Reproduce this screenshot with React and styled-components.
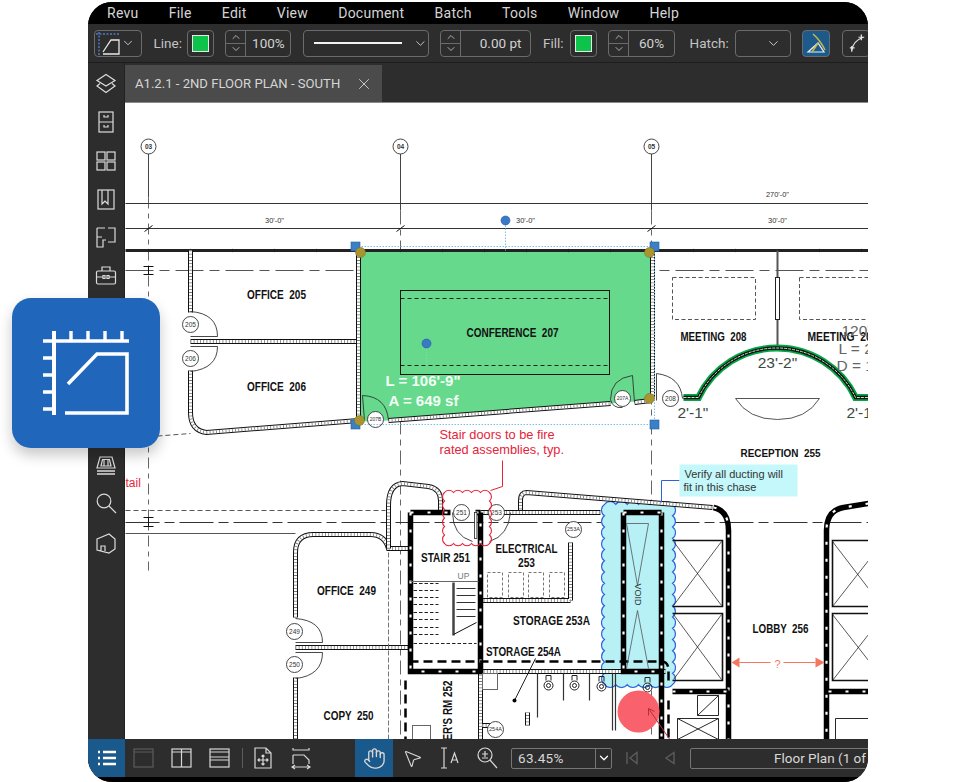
import React from "react";
import styled, { createGlobalStyle } from "styled-components";
import { ChevronDown, ChevronUp, X, Hand, MousePointer2 } from "lucide-react";

const Global = createGlobalStyle`
  html, body { margin: 0; padding: 0; background: #fff; overflow: hidden; }
  body { font-family: Roboto, "Liberation Sans", sans-serif; }
`;

const Stage = styled.div`
  position: relative;
  width: 959px;
  height: 782px;
  padding: 2px 91px 0 88px;
  box-sizing: border-box;
`;
const Win = styled.div`
  width: 780px;
  height: 780px;
  display: flex;
  flex-direction: column;
  background: #000;
  border-radius: 24px;
  overflow: hidden;
`;
const MenuBar = styled.nav`
  height: 22px;
  flex: none;
  display: flex;
  align-items: center;
  gap: 30.2px;
  padding-left: 19px;
  background: #000;
`;
const MenuItem = styled.span`
  color: #d4d4d4;
  font-size: 14px;
  letter-spacing: 0.25px;
  white-space: nowrap;
`;
const Toolbar = styled.div`
  height: 39px;
  flex: none;
  box-sizing: border-box;
  display: flex;
  align-items: center;
  gap: 11.5px;
  padding: 0 0 0 6px;
  background: #2d2d2d;
  border-bottom: 1px solid #1d1d1d;
  overflow: hidden;
`;
const Group = styled.div`
  display: flex;
  align-items: center;
  flex: none;
  gap: ${(p) => p.$gap || 5}px;
  margin-left: ${(p) => p.$ml || 0}px;
`;
const Label = styled.span`
  color: #c4c4c4;
  font-size: 13.5px;
  white-space: nowrap;
`;
const Control = styled.div`
  width: ${(p) => p.$w}px;
  height: 27px;
  flex: none;
  box-sizing: border-box;
  display: flex;
  align-items: center;
  justify-content: ${(p) => p.$justify || "center"};
  padding: ${(p) => p.$pad || "0"};
  border: 1px solid #6b6b6b;
  border-radius: 4px;
  color: #d2d2d2;
  font-size: 13.5px;
  background: ${(p) => p.$bg || "transparent"};
`;
const SwatchFill = styled.span`
  width: 15px;
  height: 15px;
  background: #0cc44a;
  border: 1px solid #e8e8e8;
`;
const Spinner = styled.div`
  width: ${(p) => p.$w}px;
  height: 27px;
  flex: none;
  box-sizing: border-box;
  display: flex;
  border: 1px solid #6b6b6b;
  border-radius: 4px;
`;
const Steps = styled.div`
  width: 19px;
  flex: none;
  display: flex;
  flex-direction: column;
  align-items: center;
  justify-content: space-around;
  border-right: 1px solid #6b6b6b;
  color: #cfcfcf;
  background: linear-gradient(#6b6b6b, #6b6b6b) center / 100% 1px no-repeat;
`;
const SpinValue = styled.div`
  flex: 1;
  display: flex;
  align-items: center;
  justify-content: ${(p) => p.$justify || "center"};
  padding-right: ${(p) => p.$pr || 0}px;
  color: #d2d2d2;
  font-size: 13.5px;
`;
const LineSample = styled.span`
  width: 89px;
  height: 2px;
  background: #f2f2f2;
  margin-right: 11px;
`;
const Workspace = styled.div`
  flex: 1;
  min-height: 0;
  display: flex;
`;
const Rail = styled.aside`
  width: 37px;
  flex: none;
  box-sizing: border-box;
  display: flex;
  flex-direction: column;
  align-items: center;
  gap: 14.3px;
  padding-top: 9px;
  background: #2d2d2d;
  border-right: 1px solid #222;
`;
const RailGap = styled.div`
  height: 138px;
  flex: none;
`;
const Main = styled.main`
  flex: 1;
  min-width: 0;
  display: flex;
  flex-direction: column;
`;
const TabStrip = styled.div`
  height: 40px;
  flex: none;
  box-sizing: border-box;
  display: flex;
  padding-top: 2px;
  background: #2d2d2d;
  border-bottom: 1px solid #8a8a8a;
`;
const Tab = styled.div`
  width: 257px;
  box-sizing: border-box;
  display: flex;
  align-items: center;
  justify-content: space-between;
  padding: 0 9px 0 10px;
  background: #4b4b4b;
  color: #d6d6d6;
  font-size: 13.1px;
  white-space: nowrap;
`;
const Canvas = styled.div`
  flex: 1;
  min-height: 0;
  background: #fff;
  overflow: hidden;
`;
const PlanSvg = styled.svg`
  display: block;
`;
const BottomBar = styled.footer`
  height: 38px;
  flex: none;
  display: flex;
  align-items: center;
  background: #2d2d2d;
  overflow: hidden;
`;
const BottomBtn = styled.div`
  width: ${(p) => p.$w || 38}px;
  height: 38px;
  flex: none;
  display: flex;
  align-items: center;
  justify-content: center;
  margin-left: ${(p) => p.$ml || 0}px;
  background: ${(p) => (p.$active ? "#19598c" : "transparent")};
  color: ${(p) => (p.$dim ? "#5c5c5c" : "#d8d8d8")};
`;
const BarSep = styled.span`
  width: 1px;
  height: 20px;
  flex: none;
  margin-left: 3px;
  background: #5c5c5c;
`;
const ZoomSelect = styled.div`
  width: 101px;
  height: 21px;
  flex: none;
  box-sizing: border-box;
  display: flex;
  margin-left: 4px;
  border: 1px solid #767676;
  border-radius: 2px;
  color: #d8d8d8;
  font-size: 13.5px;
`;
const ZoomValue = styled.span`
  flex: 1;
  padding-left: 6px;
  line-height: 19px;
  letter-spacing: 0.3px;
  border-right: 1px solid #767676;
`;
const ZoomArrow = styled.span`
  width: 15px;
  display: flex;
  align-items: center;
  justify-content: center;
  color: #fff;
`;
const PageField = styled.div`
  width: 200px;
  height: 21px;
  flex: none;
  box-sizing: border-box;
  margin-left: 1px;
  padding-left: 83px;
  border: 1px solid #767676;
  border-radius: 2px;
  color: #d8d8d8;
  font-size: 13.5px;
  line-height: 19px;
  white-space: nowrap;
`;
const FootPad = styled.div`
  height: 5px;
  flex: none;
  background: #000;
`;
const Tile = styled.div`
  position: absolute;
  left: 12px;
  top: 298px;
  width: 148px;
  height: 150px;
  display: flex;
  border-radius: 19px;
  background: #2067bb;
  box-shadow: 0 7px 14px rgba(0, 0, 0, 0.22);
`;
const RoomText = styled.text`
  font-family: "Liberation Sans", sans-serif;
  font-weight: 700;
  white-space: pre;
  font-size: ${(p) => p.$size || 12}px;
  fill: ${(p) => p.$fill || "#111"};
`;
const NoteText = styled.text`
  font-family: "Liberation Sans", sans-serif;
  font-weight: ${(p) => (p.$bold ? 700 : 400)};
  font-size: ${(p) => p.$size || 12.5}px;
  fill: ${(p) => p.$fill || "#333"};
`;

const Ico = ({ children, s = 24, sw = 1.2 }) => (
  <svg width={s} height={s} viewBox="0 0 24 24" fill="none" stroke="currentColor" strokeWidth={sw}>
    {children}
  </svg>
);
const RailIcon = styled.div`
  width: 24px;
  height: 24px;
  flex: none;
  color: #dcdcdc;
`;

const Room = ({ x, y, w, children, size, fill }) => (
  <RoomText x={x} y={y} textAnchor="middle" textLength={w} lengthAdjust="spacingAndGlyphs" $size={size} $fill={fill}>
    {children}
  </RoomText>
);

const Wall = ({ d }) => (
  <g fill="none">
    <path d={d} stroke="#111" strokeWidth="5" />
    <path d={d} stroke="#fff" strokeWidth="3" />
    <path d={d} stroke="#777" strokeWidth="3" strokeDasharray="0.8 2.4" />
  </g>
);
const HeavyWall = ({ d }) => (
  <g fill="none">
    <path d={d} stroke="#000" strokeWidth="5.5" />
    <path d={d} stroke="#fff" strokeWidth="2.2" strokeDasharray="3 14" />
  </g>
);
const Bubble = ({ x, y, r = 8, t, size = 6.5, bold }) => (
  <g>
    <circle cx={x} cy={y} r={r} fill="#fff" stroke="#333" strokeWidth="0.9" />
    <NoteText x={x} y={y + size * 0.36} textAnchor="middle" $size={size} $bold={bold}>
      {t}
    </NoteText>
  </g>
);
const cloud = (x0, y0, x1, y1, s) => {
  let d = `M${x0} ${y0}`;
  const r = s * 0.62;
  const nx = Math.round((x1 - x0) / s);
  const ny = Math.round((y1 - y0) / s);
  const arc = (x, y) => (d += ` A${r} ${r} 0 0 1 ${x.toFixed(1)} ${y.toFixed(1)}`);
  for (let i = 1; i <= nx; i++) arc(x0 + ((x1 - x0) * i) / nx, y0);
  for (let i = 1; i <= ny; i++) arc(x1, y0 + ((y1 - y0) * i) / ny);
  for (let i = 1; i <= nx; i++) arc(x1 - ((x1 - x0) * i) / nx, y1);
  for (let i = 1; i <= ny; i++) arc(x0, y1 - ((y1 - y0) * i) / ny);
  return d + "Z";
};
const Handle = ({ x, y }) => <rect x={x - 4.5} y={y - 4.5} width="9" height="9" fill="#3b7fc6" stroke="#1f5f9f" strokeWidth="0.6" />;
const Olive = ({ x, y }) => <circle cx={x} cy={y} r="5" fill="#a89530" stroke="#7d6f20" strokeWidth="0.5" />;
const Toilet = ({ x, y }) => (
  <g fill="none" stroke="#222" strokeWidth="1">
    <circle cx={x} cy={y + 3} r="4.5" />
    <circle cx={x} cy={y + 3} r="2" />
    <path d={`M${x - 2.5} ${y - 2}V${y - 7}h5V${y - 2}`} />
  </g>
);
const Door = ({ d }) => <path d={d} fill="none" stroke="#333" strokeWidth="0.9" />;

const Plan = () => (
  <PlanSvg width="743" height="636" viewBox="125 103 743 636">
    <g transform="translate(0.5 0.5)">
    {/* grid axes */}
    <g fill="none" stroke="#444" strokeWidth="1">
      <path d="M148 153V197" />
      <path d="M148 197V570" strokeDasharray="11 5 5 5" stroke="#666" />
      <path d="M400 153V210" />
      <path d="M400 210V739" strokeDasharray="14 5 6 5" stroke="#666" />
      <path d="M651 153V210" />
      <path d="M651 210V739" strokeDasharray="14 5 6 5" stroke="#666" />
      <path d="M125 203H868" stroke="#333" />
      <path d="M125 228H868" stroke="#333" />
      <path d="M125 270H868" strokeDasharray="28 6 10 6" stroke="#555" />
      <path d="M125 522H868" strokeDasharray="34 5 10 5" stroke="#333" />
      <path d="M125 510H385" strokeDasharray="5 3" stroke="#555" />
      <path d="M125 533H295" stroke="#555" />
      <path d="M125 438L190 433" strokeDasharray="5 3" stroke="#555" />
      <path d="M143 266h10M148 266v8M143 274h10M394 266h10M399 266v8M394 274h10M143 517h10M148 517v9M143 526h10" stroke="#111" />
      <path d="M144 231l8-6M396 231l8-6M647 231l8-6" stroke="#111" />
    </g>
    <Bubble x={148} y={146} t="03" r={7.5} bold />
    <Bubble x={400} y={146} t="04" r={7.5} bold />
    <Bubble x={651} y={146} t="05" r={7.5} bold />
    <NoteText x={274} y={222} textAnchor="middle" textLength="19" lengthAdjust="spacingAndGlyphs" $size={8}>30'-0"</NoteText>
    <NoteText x={525} y={222} textAnchor="middle" textLength="19" lengthAdjust="spacingAndGlyphs" $size={8}>30'-0"</NoteText>
    <NoteText x={777} y={222} textAnchor="middle" textLength="19" lengthAdjust="spacingAndGlyphs" $size={8}>30'-0"</NoteText>
    <NoteText x={777} y={196} textAnchor="middle" textLength="23" lengthAdjust="spacingAndGlyphs" $size={8}>270'-0"</NoteText>

    {/* conference fill */}
    <polygon points="359,251 650,251 650,399 634,401 610,403 388,420 359,421" fill="#66d98c" />
    <path d="M125 250H868" stroke="#222" strokeWidth="3.2" fill="none" />
    <path d="M148 250h.1M190 250h.1M232 250h.1M274 250h.1M316 250h.1M400 250h.1M442 250h.1M484 250h.1M526 250h.1M568 250h.1M610 250h.1M693 250h.1M735 250h.1M819 250h.1M861 250h.1" stroke="#000" strokeWidth="5" fill="none" />
    <rect x="400" y="290" width="209" height="84" fill="none" stroke="#111" strokeWidth="1" />
    <path d="M400 298H609M400 365H609" stroke="#111" strokeWidth="0.9" strokeDasharray="4 3" fill="none" />

    {/* offices */}
    <Wall d="M190 250V312" />
    <Wall d="M190 370V412Q190 430 206 432L358 420" />
    <Wall d="M190 341H358" />
    <Wall d="M358 250V420" />
    <Wall d="M652 250V398" />
    <Wall d="M388 420L610 403" />
    <Wall d="M634 402L650 400" />
    <Door d="M190 311Q217 313 217 336H190M217 346H190M217 346Q217 368 190 371" />
    <Bubble x={190} y={324} t="205" />
    <Bubble x={190} y={358} t="206" />
    <Room x={276} y={298} w={59}>OFFICE  205</Room>
    <Room x={276} y={390} w={59}>OFFICE  206</Room>
    <Room x={512} y={336} w={92}>CONFERENCE  207</Room>
    <circle cx="426" cy="343" r="4.5" fill="#3a78c8" stroke="#1f5f9f" strokeWidth="0.6" />
    <path d="M426 348V366" stroke="#7da" strokeDasharray="1.5 1.5" fill="none" />
    <RoomText x={385} y={385} $size={15} $fill="#f2fff4">L = 106'-9"</RoomText>
    <RoomText x={388} y={405} $size={15} $fill="#f2fff4">A = 649 sf</RoomText>
    <Door d="M362 395Q386 396 388 420M362 395L364 420" />
    <Bubble x={375} y={419} t="207B" r={8} size={5} />
    <Door d="M632 375Q610 378 610 399Q612 408 622 407M632 375L634 402" />
    <Bubble x={622} y={398} t="207A" r={8} size={5} />
    <Door d="M656 373Q680 376 682 398M656 373V400" />
    <Bubble x={670} y={398} t="208" r={8} />

    {/* dotted selection */}
    <path d="M355 246H654M355 424H654M654 246V424M505 225V250" stroke="#7cc0e8" strokeWidth="1" strokeDasharray="1.5 1.5" fill="none" />
    <Handle x={355} y={246} />
    <Handle x={654} y={246} />
    <Handle x={355} y={424} />
    <Handle x={654} y={424} />
    <Olive x={360} y={252} />
    <Olive x={649} y={252} />
    <Olive x={359} y={420} />
    <Olive x={649} y={398} />
    <circle cx="505" cy="220" r="4.5" fill="#3a78c8" stroke="#1f5f9f" strokeWidth="0.6" />

    {/* meeting rooms */}
    <g fill="none" stroke="#555" strokeWidth="1" strokeDasharray="4 2.5">
      <rect x="672" y="277" width="83" height="42" />
      <rect x="799" y="277" width="90" height="42" />
    </g>
    <path d="M777 250V347" stroke="#555" strokeWidth="2" fill="none" />
    <rect x="775" y="277" width="4" height="42" fill="#fff" stroke="#222" strokeWidth="1" />
    <Room x={713} y={340} w={66}>MEETING  208</Room>
    <RoomText x={807} y={340} textLength="70" lengthAdjust="spacingAndGlyphs">MEETING  208</RoomText>
    <path d="M683 397H698A87 87 0 0 1 855 397H868" fill="none" stroke="#06a545" strokeWidth="7" />
    <path d="M683 397H698A87 87 0 0 1 855 397H868" fill="none" stroke="#111" strokeWidth="3.4" />
    <path d="M683 397H698A87 87 0 0 1 855 397H868" fill="none" stroke="#bfe8cc" strokeWidth="1" strokeDasharray="3 1" />
    <path d="M735 398H819Q806 419 777 419Q748 419 735 398Z" fill="#fff" stroke="#555" strokeWidth="1" />
    <NoteText x={777} y={367} textAnchor="middle" $size={15.5} $fill="#3b4a3f">23'-2"</NoteText>
    <NoteText x={677} y={417} $size={15.5} $fill="#3b4a3f">2'-1"</NoteText>
    <NoteText x={846} y={417} $size={15.5} $fill="#3b4a3f">2'-1"</NoteText>
    <NoteText x={841} y={335} $size={15.5} $fill="#666">120'</NoteText>
    <NoteText x={838} y={353} $size={15.5} $fill="#666">L = 2</NoteText>
    <NoteText x={836} y={370} $size={15.5} $fill="#666">D = 1</NoteText>
    <Room x={780} y={456} w={80} size={11.5}>RECEPTION  255</Room>

    {/* red notes */}
    <NoteText x={439} y={438} $size={12.8} $fill="#e5233a">Stair doors to be fire</NoteText>
    <NoteText x={439} y={453} $size={12.8} $fill="#e5233a">rated assemblies, typ.</NoteText>
    <NoteText x={125} y={486} $size={12} $fill="#e5233a">tail</NoteText>

    {/* cyan void */}
    <path d={cloud(604, 504, 672, 684, 11)} fill="#b7f1f6" stroke="#2a63dd" strokeWidth="1.1" />

    {/* lower walls */}
    <Wall d="M295 617V552Q295 534 313 534H370Q384 534 388 548H408" />
    <Wall d="M388 548V505Q388 484 402 483L428 486Q440 488 440 500V512" />
    <Wall d="M295 677V739" />
    <Wall d="M295 647H408" />
    <Door d="M295 618Q322 620 322 642H295M322 652H295M322 652Q322 675 295 678" />
    <Bubble x={294} y={631} t="249" />
    <Bubble x={294} y={664} t="250" />
    <path d="M388 552V739" stroke="#666" strokeWidth="0.9" strokeDasharray="5 2" fill="none" />
    <Room x={346} y={594} w={59}>OFFICE  249</Room>
    <Room x={348} y={719} w={50}>COPY  250</Room>

    <Wall d="M520 512V500Q520 492 526 492L712 507" />
    <Wall d="M480 512H600" />
    <Wall d="M570 542V600M480 600H570" />
    <Wall d="M480 671H665" />
    <Wall d="M480 671V739" />
    <Wall d="M482 725H497M527 725V712" />
    <HeavyWall d="M410 512H450M475 512H480M410 512V671H480V512" />
    <HeavyWall d="M661 512V739" />
    <HeavyWall d="M623 512H661M623 512V671H661" />
    <HeavyWall d="M713 507Q728 510 728 530V739" />
    <HeavyWall d="M868 503L843 507Q826 510 826 530V739" />
    <HeavyWall d="M672 691H728M828 691H868" />
    <path d="M409 661H661Q668 661 668 670V684" fill="none" stroke="#000" strokeWidth="2.5" strokeDasharray="9 5" />
    <path d="M668 700V739M405 680V739" fill="none" stroke="#000" strokeWidth="2.5" strokeDasharray="9 5" />

    {/* stair */}
    <path d="M410 581H478" stroke="#666" fill="none" />
    <path d="M413 583H438M413 590H438M413 597H438M413 604H438M413 612H438M413 619H438M413 627H438M413 634H438M413 643H476" stroke="#222" strokeDasharray="3.5 2" fill="none" />
    <path d="M456 588H475M456 595H475M456 602H475M456 609H475M456 616H475" stroke="#333" fill="none" />
    <path d="M453 582V635" stroke="#444" strokeWidth="2.5" fill="none" />
    <path d="M453 634L476 622" stroke="#111" fill="none" />
    <NoteText x={463} y={578} textAnchor="middle" $size={8.5} $fill="#777">UP</NoteText>
    <Room x={445} y={561} w={49}>STAIR 251</Room>
    <Room x={526} y={552} w={62}>ELECTRICAL</Room>
    <Room x={526} y={566} w={17}>253</Room>
    <g fill="none" stroke="#777" strokeDasharray="3 2">
      <rect x="487" y="572" width="15" height="25" />
      <rect x="508" y="572" width="15" height="25" />
      <rect x="528" y="572" width="15" height="25" />
      <rect x="549" y="572" width="15" height="25" />
    </g>
    <Room x={551} y={624} w={77}>STORAGE 253A</Room>
    <Room x={523} y={655} w={75}>STORAGE 254A</Room>
    <path d="M535 658L514 700" stroke="#222" fill="none" />
    <circle cx="514" cy="700" r="2" fill="#000" />
    <rect x="482" y="673" width="15" height="16" fill="none" stroke="#666" />
    <RoomText transform="translate(451 746) rotate(-90)" textLength="66" lengthAdjust="spacingAndGlyphs">TER'S RM 252</RoomText>
    <rect x="412" y="725" width="18" height="16" fill="none" stroke="#666" />
    <path d="M537 673V717M615 673V730M612 673V730M563 673V700M589 673V700" stroke="#333" fill="none" strokeWidth="1.2" />
    <Toilet x={548} y={682} />
    <Toilet x={574} y={682} />
    <Toilet x={601} y={683} />
    <Toilet x={647} y={684} />
    <Bubble x={495} y={729} t="254A" r={8} size={5.5} />
    <Door d="M452 512Q452 535 472 541M510 512Q508 535 489 541" />
    <Bubble x={461} y={512} t="251" />
    <Bubble x={496} y={512} t="253" />
    <Bubble x={573} y={529} t="253A" r={8} size={5.5} />
    <rect x="474" y="512" width="2.4" height="26" fill="#fff" stroke="#222" strokeWidth="0.8" />
    <path d={cloud(444, 492, 489, 543, 9)} fill="none" stroke="#e5233a" strokeWidth="1.1" />
    <path d="M502 460V486L490 490" fill="none" stroke="#e5233a" strokeWidth="1" />

    {/* void interior */}
    <path d="M626 523H648M626 523L637 585M648 523L637 585M626 668L637 610M648 668L637 610" stroke="#555" strokeWidth="0.8" fill="none" />
    <NoteText transform="translate(634 583) rotate(90)" $size={9} $fill="#333">VOID</NoteText>

    {/* shafts */}
    <g fill="none" stroke="#111">
      <path d="M672 540H722V606H672M672 613H722V680H672" strokeWidth="1.6" />
      <path d="M673 541L721 605M721 541L673 605M673 614L721 679M721 614L673 679" strokeWidth="0.7" />
      <path d="M868 540H832V606H868M868 613H832V680H868" strokeWidth="1.6" />
      <path d="M832 541L868 588M868 560L832 606M832 614L868 660M868 634L832 680" strokeWidth="0.7" />
      <path d="M697 695H718V715H697ZM697 715L718 695M677 739V718H718V739M677 718L718 739M718 718L677 739M868 718H835V739" strokeWidth="0.9" />
    </g>
    <Room x={780} y={632} w={56}>LOBBY  256</Room>
    <g fill="#f4765f">
      <path d="M731 662L739 657V667Z" />
      <path d="M824 662L815 657V667Z" />
    </g>
    <path d="M739 662H770M783 662H815" stroke="#f4765f" strokeWidth="1" fill="none" />
    <NoteText x={777} y={667} textAnchor="middle" $size={11} $fill="#f4765f">?</NoteText>
    <circle cx="638" cy="711" r="21" fill="#f9616c" />
    <path d="M670 740L648 708M648 708v7M648 708l6 3" stroke="#b3303a" strokeWidth="1" fill="none" />
    <path d="M661 502V480H679" stroke="#2a63dd" strokeWidth="1" fill="none" />
    <rect x="679" y="464" width="118" height="32" fill="#c5f8fb" />
    <NoteText x={684} y={477} $size={11} $fill="#333">Verify all ducting will</NoteText>
    <NoteText x={683} y={490} $size={11} $fill="#333">fit in this chase</NoteText>
    </g>
  </PlanSvg>
);

const Stepper = ({ w, value, justify, pr }) => (
  <Spinner $w={w}>
    <Steps>
      <ChevronUp size={12} strokeWidth={1.6} />
      <ChevronDown size={12} strokeWidth={1.6} />
    </Steps>
    <SpinValue $justify={justify} $pr={pr}>{value}</SpinValue>
  </Spinner>
);

const Menu = ["Revu", "File", "Edit", "View", "Document", "Batch", "Tools", "Window", "Help"];

export default function App() {
  return (
    <>
      <Global />
      <Stage>
        <Win>
          <MenuBar>
            {Menu.map((m) => (
              <MenuItem key={m}>{m}</MenuItem>
            ))}
          </MenuBar>
          <Toolbar>
            <Control $w={48} $justify="flex-start">
              <svg width="26" height="25" viewBox="0 0 26 25" fill="none">
                <path d="M1 3H24M4 1V24" stroke="#4d78c0" strokeWidth="1.5" strokeDasharray="2 1.5" />
                <path d="M8 21L16 9H24V23H8" stroke="#e8e8e8" strokeWidth="1.3" />
              </svg>
              <ChevronDown size={14} color="#d0d0d0" strokeWidth={1.6} />
            </Control>
            <Group>
              <Label>Line:</Label>
              <Control $w={27}><SwatchFill /></Control>
            </Group>
            <Stepper w={66} value="100%" />
            <Control $w={126} $justify="flex-start" $pad="0 0 0 10px">
              <LineSample />
              <ChevronDown size={15} strokeWidth={1.5} />
            </Control>
            <Stepper w={91} value="0.00 pt" justify="flex-end" pr={9} />
            <Group $gap={6}>
              <Label>Fill:</Label>
              <Control $w={27}><SwatchFill /></Control>
            </Group>
            <Stepper w={67} value="60%" />
            <Group $gap={6} $ml={3}>
              <Label>Hatch:</Label>
              <Control $w={56} $justify="flex-end" $pad="0 9px 0 0">
                <ChevronDown size={15} strokeWidth={1.5} />
              </Control>
            </Group>
            <Control $w={28} $bg="#1d5a8c">
              <svg width="24" height="24" viewBox="0 0 24 24" fill="none">
                <path d="M4 21H20L14 12Z" stroke="#f0f0f0" strokeWidth="1.2" />
                <path d="M9 3Q16 9 21 19M14 12L8 21" stroke="#c8b84a" strokeWidth="1.6" />
              </svg>
            </Control>
            <Control $w={28} $justify="flex-start" $pad="0 0 0 3px">
              <svg width="24" height="24" viewBox="0 0 24 24" fill="none" stroke="#e2e2e2" strokeWidth="1.3">
                <path d="M6 20Q7 10 18 6" />
                <path d="M16 3v6M13 6h6M4 17h5M6 15v6" />
              </svg>
            </Control>
          </Toolbar>
          <Workspace>
            <Rail>
              <RailIcon><Ico><path d="M12 2.5L21 8.5L12 14L3 8.5Z" /><path d="M6 11.5L3 14L12 20.5L21 14L18 11.5" /></Ico></RailIcon>
              <RailIcon><Ico><rect x="5" y="2" width="14" height="20" /><path d="M5 12H19M10 5v2h4V5M10 15v2h4v-2" /></Ico></RailIcon>
              <RailIcon><Ico><rect x="3" y="3" width="8" height="8" /><rect x="13" y="3" width="8" height="8" /><rect x="3" y="13" width="8" height="8" /><rect x="13" y="13" width="8" height="8" /></Ico></RailIcon>
              <RailIcon><Ico><rect x="4" y="3" width="16" height="19" /><path d="M8 3V17L11 14L14 17V3" /></Ico></RailIcon>
              <RailIcon><Ico><path d="M3 3H11M14 3H21V17H14M3 3V22H9V15H12M3 12H8" /></Ico></RailIcon>
              <RailIcon><Ico><rect x="2.5" y="8" width="19" height="13" rx="1.5" /><path d="M8 8V4H16V8M3 14H9M15 14H21M9 12.5H11V15.5H9ZM13 12.5H15V15.5H13Z" /></Ico></RailIcon>
              <RailGap />
              <RailIcon><Ico><path d="M6 3H18L21 14H3ZM8.5 5.5H15.5L17 12H7ZM10 6V12M14 6V12" /><path d="M3 17H21M3 20H21" strokeWidth="1.6" /></Ico></RailIcon>
              <RailIcon><Ico><circle cx="10" cy="9" r="6.8" /><path d="M15 14L22 21" /></Ico></RailIcon>
              <RailIcon><Ico><path d="M3 8L15 3L21 8V18L15 22L3 19ZM7 20V15H11V20" /></Ico></RailIcon>
            </Rail>
            <Main>
              <TabStrip>
                <Tab>
                  A1.2.1 - 2ND FLOOR PLAN - SOUTH
                  <X size={18} strokeWidth={1.2} />
                </Tab>
              </TabStrip>
              <Canvas>
                <Plan />
              </Canvas>
            </Main>
          </Workspace>
          <BottomBar>
            <BottomBtn $active $w={37}>
              <Ico sw={2.4}><path d="M3 6H5M3 12H5M3 18H5" stroke="#fff" /><path d="M8 6H21M8 12H21M8 18H21" stroke="#fff" /></Ico>
            </BottomBtn>
            <BottomBtn $dim><Ico><rect x="2" y="3" width="19" height="18" /><path d="M2 6H21" /></Ico></BottomBtn>
            <BottomBtn><Ico><rect x="2" y="3" width="19" height="18" /><path d="M11.5 3V21M2 6H21" /></Ico></BottomBtn>
            <BottomBtn><Ico><rect x="2" y="3" width="19" height="18" /><path d="M2 6H21M2 11H21M2 14H21" /></Ico></BottomBtn>
            <BarSep />
            <BottomBtn $ml={1}><Ico><path d="M4 2H15L20 7V22H4ZM15 2V7H20" /><path d="M12 9V19M7 14H17M10.5 10.5L12 9L13.5 10.5M10.5 17.5L12 19L13.5 17.5M8.5 12.5L7 14L8.5 15.5M15.5 12.5L17 14L15.5 15.5" /></Ico></BottomBtn>
            <BottomBtn><Ico><path d="M4 2V4H20V2M4 9H15L20 14V18M4 9V18" /><path d="M3 21H21M6 19L3 21L6 23M18 19L21 21L18 23" /></Ico></BottomBtn>
            <BottomBtn $active $ml={35}><Hand size={23} strokeWidth={1.4} /></BottomBtn>
            <BottomBtn><MousePointer2 size={21} strokeWidth={1.3} /></BottomBtn>
            <BottomBtn>
              <svg width="24" height="24" viewBox="0 0 24 24" fill="none" stroke="#d8d8d8" strokeWidth="1.2">
                <path d="M3 2H9M3 22H9M6 2V22M13 17L16.5 7L20 17M14.2 14H18.8" />
              </svg>
            </BottomBtn>
            <BottomBtn><Ico><circle cx="9" cy="9" r="7" /><path d="M14 14L21 22M6 8H12M9 5V11M6 12H12" /></Ico></BottomBtn>
            <ZoomSelect>
              <ZoomValue>63.45%</ZoomValue>
              <ZoomArrow><ChevronDown size={14} strokeWidth={2.2} /></ZoomArrow>
            </ZoomSelect>
            <BottomBtn $dim $ml={1}>
              <svg width="16" height="16" viewBox="0 0 16 16" fill="none" stroke="currentColor" strokeWidth="1.4"><path d="M3 2V14M13 2.5V13.5L6 8Z" /></svg>
            </BottomBtn>
            <BottomBtn $dim>
              <svg width="16" height="16" viewBox="0 0 16 16" fill="none" stroke="currentColor" strokeWidth="1.4"><path d="M12 2.5V13.5L4 8Z" /></svg>
            </BottomBtn>
            <PageField>Floor Plan (1 of 1)</PageField>
          </BottomBar>
          <FootPad />
        </Win>
        <Tile>
          <svg width="148" height="150" viewBox="0 0 148 150" fill="none" stroke="#fff">
            <path d="M31 43H117M42 33V43M59 33V43M76 33V43M93 33V43M110 33V43" strokeWidth="3.4" />
            <path d="M42 33V117" strokeWidth="4" />
            <path d="M31 60H42M31 77H42M31 94H42M31 111H42" strokeWidth="3.4" />
            <path d="M56 86L85 56H115V115H53" strokeWidth="3.6" />
          </svg>
        </Tile>
      </Stage>
    </>
  );
}
